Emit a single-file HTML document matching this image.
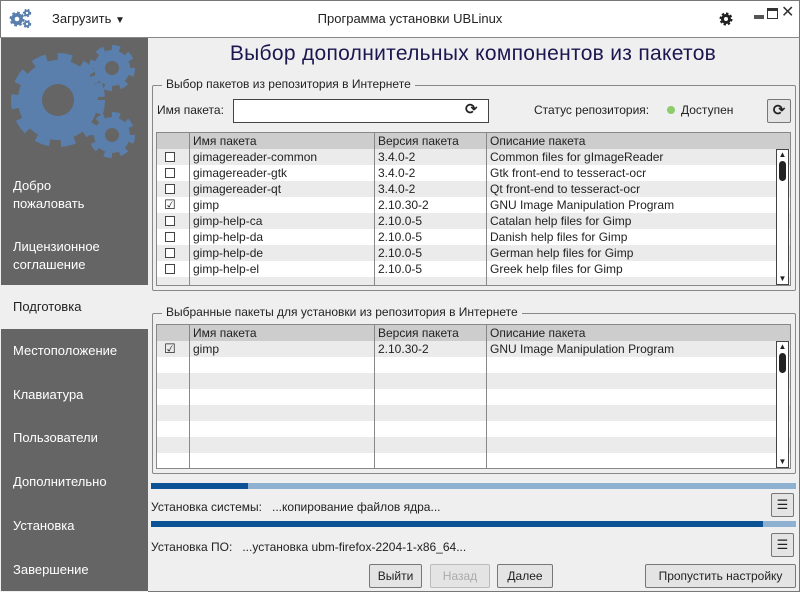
<!DOCTYPE html>
<html><head><meta charset="utf-8"><style>
*{margin:0;padding:0;box-sizing:border-box}
body{width:800px;height:592px;overflow:hidden;background:#efefef;font-family:"Liberation Sans","DejaVu Sans",sans-serif;font-size:12px;color:#222;position:relative}
.a{position:absolute}
.top{left:0;top:0;width:800px;height:38px;background:#fff;border:1px solid #777;border-bottom:1px solid #888}
.side{left:1px;top:38px;width:147px;height:553px;background:#656565}
.si{position:absolute;left:13px;color:#fff;font-size:13px;line-height:18px}
.act{left:1px;top:285px;width:147px;height:44px;background:#efefef}
.fs{border:1px solid #888;border-radius:2px}
.leg{background:#efefef;padding:0 4px;font-size:12px}
.tbl{border:1px solid #888;background:#fff;overflow:hidden}
.row{position:absolute;left:0;width:635px;height:16px;font-size:12px;line-height:16px}
.row span{position:absolute;top:0}
.g{background:#ebebeb}
.hd{background:#cdcdcd}
.vl{position:absolute;top:0;width:1px;background:#888}
.cb{position:absolute;left:8px;top:3px;width:10px;height:10px;border:1px solid #444;background:#fff}
.btn{position:absolute;border:1px solid #777;background:#e4e4e4;border-radius:2px;text-align:center;line-height:22px;font-size:12px}
.bar{position:absolute;left:151px;width:645px;height:6px;background:#8fb1d1}
.bar div{height:6px;background:#0b5394}
.sb{position:absolute;right:1px;width:13px;border:1px solid #444;background:#fff}
</style></head><body>
<div class="a top"></div>
<svg class="a" style="left:9px;top:7px" width="24" height="22" viewBox="0 0 24 22">
<g fill="#5a7fad"><circle cx="8" cy="12" r="6" stroke="#5a7fad" stroke-width="3" stroke-dasharray="2.5 2.2"/><circle cx="8" cy="12" r="2.3" fill="#fff"/>
<circle cx="18" cy="6" r="3.2" stroke="#5a7fad" stroke-width="2" stroke-dasharray="1.6 1.5"/><circle cx="18" cy="6" r="1.2" fill="#fff"/>
<circle cx="18" cy="17" r="3.2" stroke="#5a7fad" stroke-width="2" stroke-dasharray="1.6 1.5"/><circle cx="18" cy="17" r="1.2" fill="#fff"/></g></svg>
<div class="a" style="left:52px;top:11px;font-size:13px">Загрузить <span style="font-size:10px">▼</span></div>
<div class="a" style="left:0;width:820px;top:11px;text-align:center;font-size:13px">Программа установки UBLinux</div>
<svg class="a" style="left:718px;top:11px" width="16" height="16" viewBox="0 0 16 16"><circle cx="8" cy="8" r="5" fill="#222" stroke="#222" stroke-width="3" stroke-dasharray="2.2 1.7"/><circle cx="8" cy="8" r="2" fill="#fff"/></svg>
<div class="a" style="left:754px;top:15px;width:10px;height:4px;background:#555"></div>
<div class="a" style="left:767px;top:8px;width:11px;height:11px;border:1px solid #333;border-top:3px solid #333"></div>
<div class="a" style="left:781px;top:2px;font-size:16px;color:#333">✕</div>
<div class="a side"></div>
<svg class="a" style="left:1px;top:38px" width="147" height="150" viewBox="1 38 147 150">
<g fill="#5a7fad">
<circle cx="58" cy="100" r="40" stroke="#5a7fad" stroke-width="14" stroke-dasharray="13 10.5"/>
<circle cx="58" cy="100" r="16" fill="#656565"/>
<circle cx="112" cy="68" r="18" stroke="#5a7fad" stroke-width="10" stroke-dasharray="7 7.1"/>
<circle cx="112" cy="68" r="7" fill="#656565"/>
<circle cx="112" cy="135" r="18" stroke="#5a7fad" stroke-width="10" stroke-dasharray="7 7.1"/>
<circle cx="112" cy="135" r="7" fill="#656565"/>
</g></svg>
<div class="a act"></div>
<div class="si" style="top:177px">Добро<br>пожаловать</div>
<div class="si" style="top:238px">Лицензионное<br>соглашение</div>
<div class="si" style="top:298px;color:#222">Подготовка</div>
<div class="si" style="top:342px">Местоположение</div>
<div class="si" style="top:386px">Клавиатура</div>
<div class="si" style="top:429px">Пользователи</div>
<div class="si" style="top:473px">Дополнительно</div>
<div class="si" style="top:517px">Установка</div>
<div class="si" style="top:561px">Завершение</div>
<div class="a" style="left:148px;top:38px;width:652px;height:554px;border-right:1px solid #777;border-bottom:1px solid #777"></div>
<div class="a" style="left:150px;width:646px;top:42px;text-align:center;font-size:21px;color:#1c1650;letter-spacing:0.3px">Выбор дополнительных компонентов из пакетов</div>

<div class="a fs" style="left:152px;top:85px;width:644px;height:206px"></div>
<div class="a leg" style="left:162px;top:77px">Выбор пакетов из репозитория в Интернете</div>
<div class="a" style="left:157px;top:103px">Имя пакета:</div>
<div class="a" style="left:233px;top:99px;width:256px;height:24px;background:#fff;border:1px solid #444"></div>
<div class="a" style="left:465px;top:100px;font-size:15px;font-weight:bold">⟳</div>
<div class="a" style="left:534px;top:103px">Статус репозитория:</div>
<div class="a" style="left:667px;top:106px;width:8px;height:8px;border-radius:50%;background:#8ccc6a"></div>
<div class="a" style="left:681px;top:103px">Доступен</div>
<div class="btn" style="left:767px;top:99px;width:24px;height:24px;font-size:15px;font-weight:bold;line-height:22px">⟳</div>

<div class="a tbl" style="left:156px;top:132px;width:635px;height:154px">
<div class="row hd" style="top:0"><span style="left:36px">Имя пакета</span><span style="left:221px">Версия пакета</span><span style="left:333px">Описание пакета</span></div>
<div class="row g" style="top:16px"><div class="cb"></div><span style="left:36px">gimagereader-common</span><span style="left:221px">3.4.0-2</span><span style="left:333px">Common files for gImageReader</span></div>
<div class="row" style="top:32px"><div class="cb"></div><span style="left:36px">gimagereader-gtk</span><span style="left:221px">3.4.0-2</span><span style="left:333px">Gtk front-end to tesseract-ocr</span></div>
<div class="row g" style="top:48px"><div class="cb"></div><span style="left:36px">gimagereader-qt</span><span style="left:221px">3.4.0-2</span><span style="left:333px">Qt front-end to tesseract-ocr</span></div>
<div class="row" style="top:64px"><span style="left:7px;font-size:13px">☑</span><span style="left:36px">gimp</span><span style="left:221px">2.10.30-2</span><span style="left:333px">GNU Image Manipulation Program</span></div>
<div class="row g" style="top:80px"><div class="cb"></div><span style="left:36px">gimp-help-ca</span><span style="left:221px">2.10.0-5</span><span style="left:333px">Catalan help files for Gimp</span></div>
<div class="row" style="top:96px"><div class="cb"></div><span style="left:36px">gimp-help-da</span><span style="left:221px">2.10.0-5</span><span style="left:333px">Danish help files for Gimp</span></div>
<div class="row g" style="top:112px"><div class="cb"></div><span style="left:36px">gimp-help-de</span><span style="left:221px">2.10.0-5</span><span style="left:333px">German help files for Gimp</span></div>
<div class="row" style="top:128px"><div class="cb"></div><span style="left:36px">gimp-help-el</span><span style="left:221px">2.10.0-5</span><span style="left:333px">Greek help files for Gimp</span></div>
<div class="row g" style="top:144px"></div>
<div class="vl" style="left:32px;height:154px"></div><div class="vl" style="left:217px;height:154px"></div><div class="vl" style="left:329px;height:154px"></div>
<div class="sb" style="top:16px;height:136px"><div style="font-size:8px;text-align:center">▲</div><div style="margin:2px auto;width:7px;height:20px;border-radius:4px;background:#222"></div><div style="position:absolute;bottom:1px;width:11px;font-size:8px;text-align:center">▼</div></div>
</div>

<div class="a fs" style="left:152px;top:313px;width:644px;height:161px"></div>
<div class="a leg" style="left:162px;top:305px">Выбранные пакеты для установки из репозитория в Интернете</div>
<div class="a tbl" style="left:156px;top:324px;width:635px;height:145px">
<div class="row hd" style="top:0"><span style="left:36px">Имя пакета</span><span style="left:221px">Версия пакета</span><span style="left:333px">Описание пакета</span></div>
<div class="row g" style="top:16px"><span style="left:7px;font-size:13px">☑</span><span style="left:36px">gimp</span><span style="left:221px">2.10.30-2</span><span style="left:333px">GNU Image Manipulation Program</span></div>
<div class="row" style="top:32px"></div><div class="row g" style="top:48px"></div><div class="row" style="top:64px"></div><div class="row g" style="top:80px"></div><div class="row" style="top:96px"></div><div class="row g" style="top:112px"></div><div class="row" style="top:128px"></div>
<div class="vl" style="left:32px;height:145px"></div><div class="vl" style="left:217px;height:145px"></div><div class="vl" style="left:329px;height:145px"></div>
<div class="sb" style="top:16px;height:127px"><div style="font-size:8px;text-align:center">▲</div><div style="margin:2px auto;width:7px;height:20px;border-radius:4px;background:#222"></div><div style="position:absolute;bottom:1px;width:11px;font-size:8px;text-align:center">▼</div></div>
</div>

<div class="bar" style="top:483px"><div style="width:97px"></div></div>
<div class="a" style="left:151px;top:500px">Установка системы:&nbsp;&nbsp; ...копирование файлов ядра...</div>
<div class="btn" style="left:771px;top:493px;width:23px;height:24px;font-size:13px;line-height:22px">☰</div>
<div class="bar" style="top:521px"><div style="width:612px"></div></div>
<div class="a" style="left:151px;top:540px">Установка ПО:&nbsp;&nbsp; ...установка ubm-firefox-2204-1-x86_64...</div>
<div class="btn" style="left:771px;top:533px;width:23px;height:24px;font-size:13px;line-height:22px">☰</div>
<div class="btn" style="left:369px;top:564px;width:53px;height:24px">Выйти</div>
<div class="btn" style="left:430px;top:564px;width:60px;height:24px;color:#aaa;border-color:#bbb">Назад</div>
<div class="btn" style="left:497px;top:564px;width:56px;height:24px">Далее</div>
<div class="btn" style="left:645px;top:564px;width:151px;height:24px">Пропустить настройку</div>
</body></html>
